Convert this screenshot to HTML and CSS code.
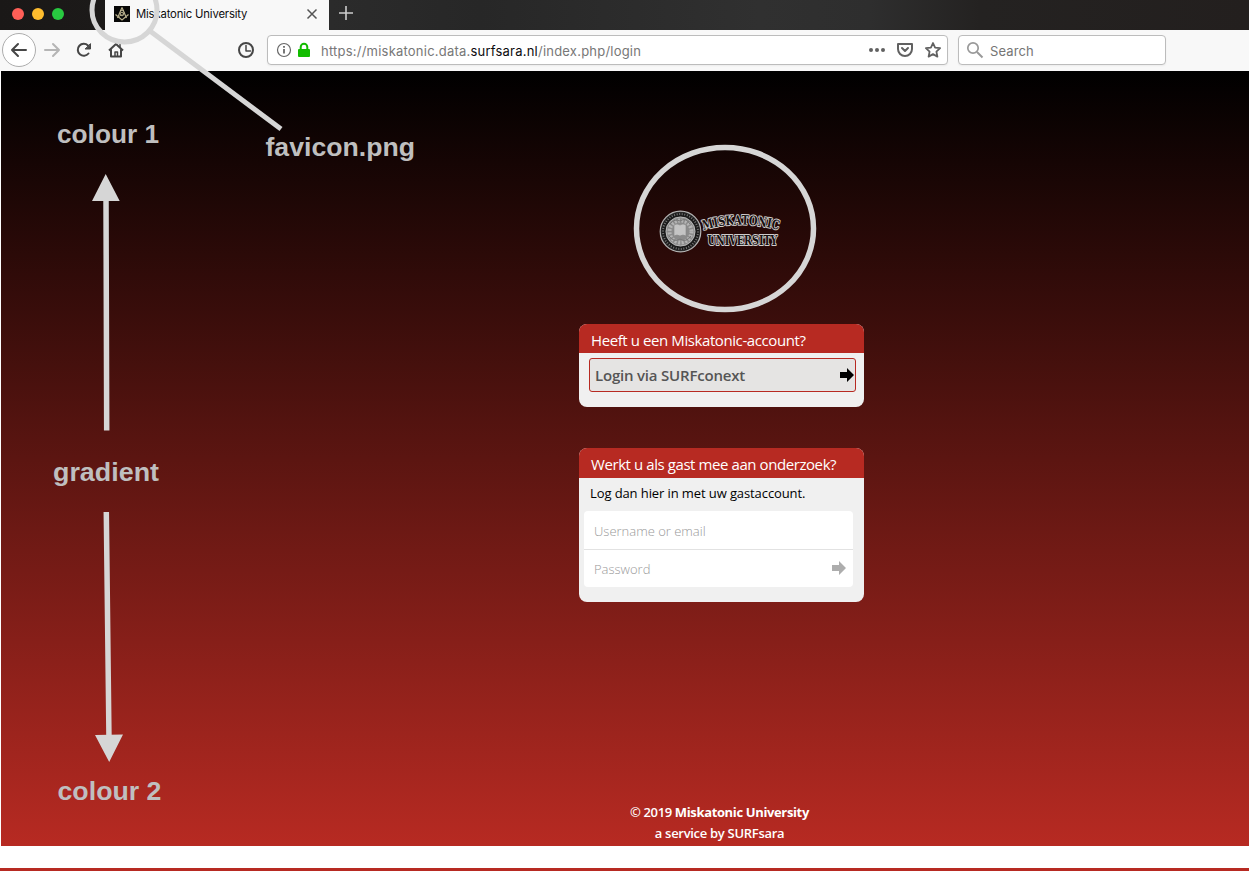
FILE: index.html
```html
<!DOCTYPE html>
<html lang="nl">
<head>
<meta charset="utf-8">
<title>Miskatonic University</title>
<link rel="stylesheet" href="styles.css">
</head>
<body>
<div class="window">
  <div class="tabbar">
    <div class="lights"><i class="light red"></i><i class="light amber"></i><i class="light green"></i></div>
    <div class="tab">
      <svg class="favicon" width="16" height="16" viewBox="0 0 16 16"><rect width="16" height="16" fill="#080807"/><g fill="none" stroke="#b9b18d" stroke-width="1.200"><path d="M8 1.500 3.500 12M8 1.500l4.500 10.500M1.500 8.500l6.500 5.500 6.500-5.500"/><circle cx="8" cy="8" r="1.800" stroke-width="1"/><path d="M6 4.500h4M5 10.500l6-4" stroke-width=".8"/></g></svg>
      <span class="tab-title">Miskatonic University</span>
      <svg class="close" width="12" height="12" viewBox="0 0 12 12"><path d="M1.500 1.500l9 9M10.500 1.500l-9 9" stroke="#555" stroke-width="1.500"/></svg>
    </div>
    <svg class="newtab" width="16" height="16" viewBox="0 0 16 16"><path d="M8 1v14M1 8h14" stroke="#ccc" stroke-width="1.600"/></svg>
  </div>
  <div class="toolbar">
    <svg class="nav" width="266" height="41" viewBox="0 0 266 41">
      <circle cx="19" cy="20" r="16.500" fill="#fff" stroke="#adadad"/>
      <g fill="none" stroke="#464646" stroke-width="2" stroke-linecap="round" stroke-linejoin="round">
        <path d="M12 20h14M18 14l-6 6 6 6"/>
        <path d="M45 20h14M53 14l6 6-6 6" stroke="#b5b5b5"/>
        <path d="M88.500 23.500A6 6 0 1 1 88 15.500"/>
        <path d="M90.500 14v5h-5z" fill="#464646" stroke-width="1"/>
        <path d="M109 20.500l7-6.500 7 6.500M111 19.500v7h10v-7" stroke-linecap="butt"/><path d="M120 14v3" stroke-width="1.500"/>
        <path d="M115 26v-4h2.500v4" stroke-width="1.500"/>
        <circle cx="246" cy="20" r="7"/><path d="M246 15.500V21h4.500" stroke-width="1.500"/>
      </g>
    </svg>
    <div class="urlbar">
      <svg width="42" height="28" viewBox="0 0 42 28"><circle cx="16" cy="14" r="6.500" fill="none" stroke="#666" stroke-width="1.200"/><path d="M16 13v4.500M16 10v1.700" stroke="#555" stroke-width="1.600"/><rect x="30" y="13" width="12" height="8" rx="1" fill="#12bc00"/><path d="M32.700 14v-3a3.300 3.300 0 0 1 6.600 0v3" fill="none" stroke="#12bc00" stroke-width="2"/></svg>
      <span class="url">https://miskatonic.data.<b>surfsara.nl</b>/index.php/login</span>
      <svg class="actions" width="80" height="28" viewBox="0 0 80 28"><g fill="#616161"><circle cx="4" cy="14" r="2"/><circle cx="10" cy="14" r="2"/><circle cx="16" cy="14" r="2"/></g><g fill="none" stroke="#616161" stroke-width="2" stroke-linejoin="round"><path d="M31 8h14v5a7 7 0 0 1-14 0z"/><path d="M35 12l3 3 3-3" stroke-linecap="round"/><path d="M66 7l2.100 4.600 5 .6-3.700 3.400 1 5-4.400-2.500-4.400 2.500 1-5-3.700-3.400 5-.6z" stroke-width="1.800"/></g></svg>
    </div>
    <div class="search">
      <svg width="18" height="18" viewBox="0 0 18 18"><circle cx="7" cy="7" r="5.200" fill="none" stroke="#999" stroke-width="1.700"/><path d="M11 11l5.500 5.500" stroke="#999" stroke-width="2"/></svg>
      <span>Search</span>
    </div>
  </div>
</div>

<main class="page">
  <svg class="logo" width="134" height="48" viewBox="0 0 134 48">
    <circle cx="22.500" cy="24.500" r="20.300" fill="#333" stroke="#b5b5b5" stroke-width="1.200"/>
    <circle cx="22.500" cy="24.500" r="17" fill="none" stroke="#1a1a1a" stroke-width="4"/>
    <circle cx="22.500" cy="24.500" r="17.500" fill="none" stroke="#777" stroke-width="2" stroke-dasharray="1 1.600"/>
    <circle cx="22.500" cy="24.500" r="14.500" fill="#8b8b8b" stroke="#bbb"/>
    <circle cx="22.500" cy="24.500" r="11" fill="none" stroke="#b4b4b4" stroke-width="4" stroke-dasharray="2 1.500"/>
    <path d="M11 29q5 7 11 3 6 4 11-3M12 17q5-6 10-3 6-4 10 3" fill="none" stroke="#777" stroke-width="1"/>
    <path d="M16 18q3-2 6 0 3-2 6 0v11q-3-2-6 0-3-2-6 0z" fill="#c4c4c4" stroke="#888" stroke-width=".6"/>
    <path id="arch" d="M45.500 23Q83 11.500 126 24.500" fill="none"/>
    <g class="wordmark">
      <text class="arched"><textPath href="#arch" textLength="76" lengthAdjust="spacingAndGlyphs">MISKATONIC</textPath></text>
      <text x="49.500" y="38" textLength="70" lengthAdjust="spacingAndGlyphs">UNIVERSITY</text>
    </g>
  </svg>

  <section class="card account">
    <h2>Heeft u een Miskatonic-account?</h2>
    <button class="login"><span>Login via SURFconext</span>
      <svg width="14" height="14" viewBox="0 0 14 14"><path d="M0 4h7V0l7 7-7 7v-4H0z"/></svg></button>
  </section>

  <section class="card guest">
    <h2>Werkt u als gast mee aan onderzoek?</h2>
    <p>Log dan hier in met uw gastaccount.</p>
    <div class="fields">
      <div class="field">Username or email</div>
      <div class="field password"><span>Password</span><svg width="14" height="14" viewBox="0 0 14 14"><path d="M0 4h7V0l7 7-7 7v-4H0z" fill="#adadad"/></svg></div>
    </div>
  </section>

  <footer><div class="owner">© 2019 <b>Miskatonic University</b></div><div class="service">a service by SURFsara</div></footer>
</main>
<div class="rule"></div>

<svg class="notes" width="1249" height="871" viewBox="0 0 1249 871">
  <g fill="none" stroke="#d6d6d6">
    <ellipse cx="124.500" cy="10" rx="32.500" ry="32" stroke-width="5"/>
    <path d="M150 31L281 129" stroke-width="5"/>
    <ellipse cx="725" cy="228.500" rx="88.500" ry="81" stroke-width="5.500"/>
    <path d="M106 196L106.700 430.500M106.300 512L109 740" stroke-width="5.500"/>
  </g>
  <path d="M105.700 174l14 27H92zM109.200 762L95 735l28-.5z" fill="#d6d6d6"/>
  <g class="labels">
    <text x="57" y="143" textLength="102" lengthAdjust="spacingAndGlyphs">colour 1</text>
    <text x="265.500" y="156" textLength="149.500" lengthAdjust="spacingAndGlyphs">favicon.png</text>
    <text x="53" y="481" textLength="106" lengthAdjust="spacingAndGlyphs">gradient</text>
    <text x="57.500" y="800" textLength="104" lengthAdjust="spacingAndGlyphs">colour 2</text>
  </g>
</svg>
</body>
</html>
```

FILE: styles.css
```css
* { box-sizing: border-box; }
body { margin: 0; width: 1249px; height: 871px; overflow: hidden; position: relative; display: flex; flex-direction: column; background: #fff; font-family: "Open Sans", sans-serif; }
svg { display: block; flex: none; overflow: visible; }
.window { font-family: Inter, Roboto, sans-serif; flex: none; }
.tabbar { height: 30px; display: flex; align-items: center; background: linear-gradient(90deg, #1a1817 0, #1c1a19 105px, #2b2b2b 330px, #272727 480px, #303030 760px, #2e2e2e 870px, #242221 980px, #231f1e 100%); }
.lights { width: 105px; padding: 0 0 3px 12px; display: flex; gap: 8px; flex: none; }
.light { width: 12px; height: 12px; border-radius: 50%; }
.red { background: #ff5f57; }
.amber { background: #ffbd2e; }
.green { background: #28c940; }
.tab { width: 224px; height: 30px; background: #f8f8f8; display: flex; align-items: center; padding: 0 11px 2px 9px; }
.tab-title { margin-left: 6px; font-size: 11.3px; letter-spacing: -.16px; color: #0c0c0d; white-space: nowrap; }
.close { margin-left: auto; }
.newtab { margin: 0 0 4px 9px; }
.toolbar { height: 41px; background: #f8f8f8; display: flex; align-items: flex-start; }
.urlbar { width: 681px; height: 30px; margin: 5px 0 0 1px; border: 1px solid #bcbcbc; border-radius: 4px; background: #fff; display: flex; align-items: center; box-shadow: 0 1px 2px #0000000d; }
.url { margin-left: 11px; padding-top: 2px; font-family: Inter, sans-serif; font-size: 13px; letter-spacing: .22px; color: #777; white-space: nowrap; }
.url b { color: #0c0c0d; font-weight: 400; }
.actions { margin-left: auto; }
.search { width: 208px; height: 30px; margin: 5px 0 0 10px; padding-left: 7px; border: 1px solid #bcbcbc; border-radius: 4px; background: #fff; display: flex; align-items: center; gap: 6px; font-size: 13px; letter-spacing: .1px; color: #757575; box-shadow: 0 1px 2px #0000000d; }
.search span { padding-top: 2px; }

.page { height: 775px; margin-left: 1px; padding-left: 578px; background: linear-gradient(#000, #b72a22); display: flex; flex-direction: column; align-items: flex-start; flex: none; }
.logo { margin: 136px 0 0 79px; }
.wordmark { font: bold 13px "DejaVu Serif", serif; fill: #161212; stroke: #d0cccc; stroke-width: 2px; paint-order: stroke; stroke-linejoin: round; }
.arched { font-size: 13px; }
.card { width: 285px; background: #f0f0f0; border-radius: 8px; overflow: hidden; flex: none; }
.card h2 { margin: 0; padding-left: 12px; font-size: 15px; font-weight: 400; color: #fff; background: #b72a22; white-space: nowrap; }
.account { height: 83px; margin-top: 69px; }
.account h2 { height: 29px; line-height: 33px; letter-spacing: -.41px; }
.login { width: 267px; height: 34px; margin: 5px 0 0 10px; padding: 0 1px 0 5px; border: 1px solid #b72a22; border-radius: 3px; background: #e5e4e3; display: flex; align-items: center; justify-content: space-between; font: 600 15px "Open Sans", sans-serif; letter-spacing: -.2px; color: #555; }
.guest { height: 154px; margin-top: 41px; }
.guest h2 { height: 30px; line-height: 33px; letter-spacing: -.42px; }
.guest p { margin: 0; height: 33px; padding-left: 11px; line-height: 31px; font-size: 13px; letter-spacing: -.1px; color: #000; white-space: nowrap; }
.fields { width: 269px; margin-left: 5px; border-radius: 4px; background: #fff; overflow: hidden; }
.field { height: 38px; padding: 1px 7px 0 10px; display: flex; align-items: center; justify-content: space-between; font-size: 13px; font-weight: 300; color: #999; }
.field svg { margin-top: -2px; }
.password { border-top: 1px solid #e2e2e2; }
footer { width: 281px; margin-top: 200px; text-align: center; color: #fff; font-size: 13px; line-height: 21px; white-space: nowrap; }
footer b { font-weight: 700; }
.owner { letter-spacing: -.36px; font-weight: 600; }
.service { letter-spacing: -.3px; font-weight: 600; }
.rule { height: 3px; margin-top: 22px; background: #b72a22; flex: none; }

/* Callouts drawn over the browser window */
.notes { position: absolute; left: 0; top: 0; pointer-events: none; }
.labels { font: bold 26px "Liberation Sans", Arial, sans-serif; fill: #bfbfbf; }
```
